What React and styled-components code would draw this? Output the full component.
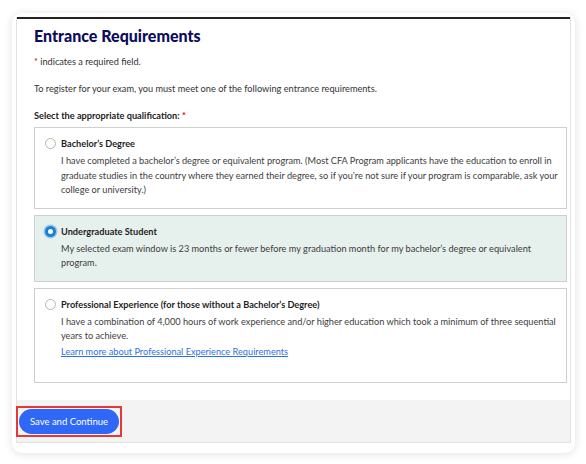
import React from 'react'
import styled, { createGlobalStyle } from 'styled-components'

const Global = createGlobalStyle`
  html, body { margin: 0; padding: 0; background: #fff; }
  body { font-family: Lato, "Open Sans", sans-serif; color: #333; }
`

const options = [
  {
    id: 'bachelor',
    title: 'Bachelor\u2019s Degree',
    text: 'I have completed a bachelor\u2019s degree or equivalent program. (Most CFA Program applicants have the education to enroll in graduate studies in the country where they earned their degree, so if you\u2019re not sure if your program is comparable, ask your college or university.)',
  },
  {
    id: 'student',
    title: 'Undergraduate Student',
    text: 'My selected exam window is 23 months or fewer before my graduation month for my bachelor\u2019s degree or equivalent program.',
    checked: true,
  },
  {
    id: 'experience',
    title: 'Professional Experience (for those without a Bachelor\u2019s Degree)',
    text: 'I have a combination of 4,000 hours of work experience and/or higher education which took a minimum of three sequential years to achieve.',
    link: 'Learn more about Professional Experience Requirements',
    tall: true,
  },
]

export default function App() {
  return (
    <>
      <Global />
      <Card>
        <Frame>
          <Section>
            <Title>Entrance Requirements</Title>
            <Note><Star>*</Star> indicates a required field.</Note>
            <Intro>To register for your exam, you must meet one of the following entrance requirements.</Intro>
            <Label>Select the appropriate qualification: <Star>*</Star></Label>
            <Options>
              {options.map(o => (
                <Option key={o.id} $checked={o.checked} $tall={o.tall}>
                  <Radio $checked={o.checked} />
                  <Body>
                    <OptionTitle>{o.title}</OptionTitle>
                    <OptionText>{o.text}</OptionText>
                    {o.link && <Link href="#">{o.link}</Link>}
                  </Body>
                </Option>
              ))}
            </Options>
          </Section>
          <Footer>
            <Highlight>
              <Button>Save and Continue</Button>
            </Highlight>
          </Footer>
        </Frame>
      </Card>
    </>
  )
}

const Card = styled.div`
  margin: 13px 11px 12px 12px;
  padding: 4px 4px 10px 4px;
  background: #fff;
  border-radius: 10px;
  box-shadow: 0 1px 8px rgba(0,0,0,0.12);
`

const Frame = styled.div`
  border: 1px solid #e2e2e2;
  border-top: none;
  background: #f3f3f3;
`

const Section = styled.div`
  background: #fff;
  border-top: 2px solid #222;
  padding: 5px 3px 17px 17px;
`

const Title = styled.h1`
  margin: 0;
  font-size: 16px;
  font-weight: 900;
  color: #0c0c5c;
  line-height: 24px;
`

const Star = styled.span`
  color: #d0021b;
`

const Note = styled.p`
  margin: 7px 0 0;
  font-size: 9.2px;
  line-height: 14px;
  color: #333;
`

const Intro = styled(Note)`
  margin-top: 13px;
`

const Label = styled.p`
  margin: 13px 0 0;
  font-size: 9.2px;
  line-height: 14px;
  font-weight: 700;
  color: #222;
`

const Options = styled.div`
  display: flex;
  flex-direction: column;
  gap: 6px;
  margin-top: 4px;
`

const Option = styled.div`
  display: flex;
  gap: 5px;
  padding: 9px 4px 10px 10px;
  min-height: ${p => (p.$tall ? '74px' : 'auto')};
  border: 1px solid #cfcfcf;
  background: ${p => (p.$checked ? '#e6f0ec' : '#fff')};
`

const Radio = styled.span`
  flex: none;
  box-sizing: border-box;
  width: 11px;
  height: 11px;
  margin-top: 1px;
  border-radius: 50%;
  background: #fff;
  border: ${p => (p.$checked ? '3.5px solid #1a7fd6' : '1px solid #b5b5b5')};
  box-shadow: ${p => (p.$checked ? '0 0 0 1.5px rgba(26,127,214,0.35)' : 'none')};
`

const Body = styled.div`
  display: flex;
  flex-direction: column;
`

const OptionTitle = styled.div`
  font-size: 9.2px;
  line-height: 13px;
  font-weight: 700;
  color: #1e1e1e;
  margin-bottom: 4px;
`

const OptionText = styled.div`
  font-size: 9.2px;
  line-height: 14.5px;
  color: #3d3d3d;
`

const Link = styled.a`
  font-size: 9.2px;
  line-height: 15px;
  color: #2f6fe4;
  text-decoration: underline;
`

const Footer = styled.div`
  padding: 6px 0 5px 0;
  margin-left: -1px;
`

const Highlight = styled.div`
  display: inline-block;
  border: 2px solid #e53935;
  padding: 1px;
`

const Button = styled.button`
  display: block;
  width: 100px;
  height: 25px;
  border: none;
  border-radius: 13px;
  background: #2f67f6;
  color: #fff;
  font-family: Lato, sans-serif;
  font-size: 9.5px;
  cursor: pointer;
`
